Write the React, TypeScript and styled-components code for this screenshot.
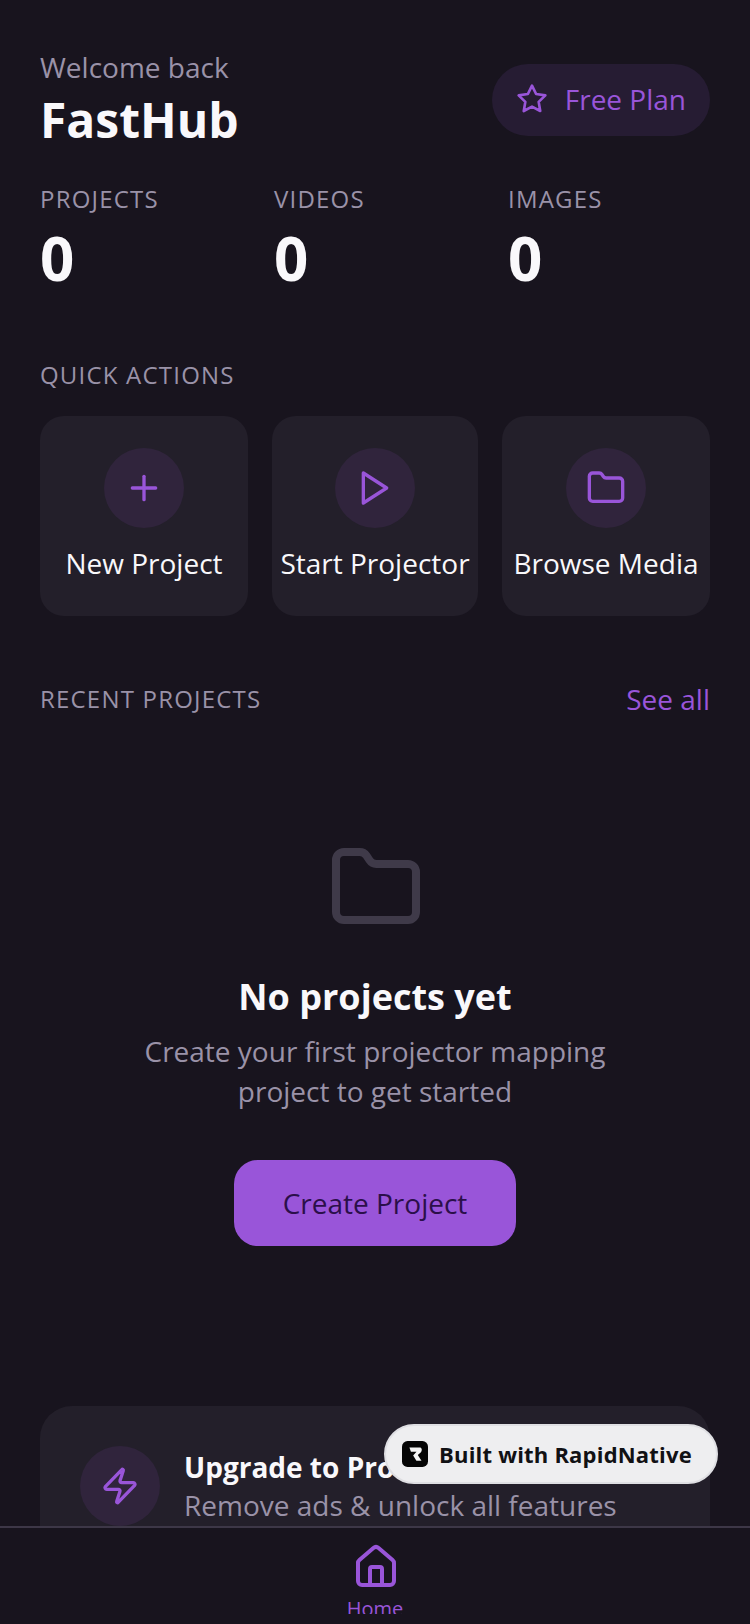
import { Folder, House, Plus, Zap } from 'lucide-react';
import { FiPlay, FiStar } from 'react-icons/fi';
import { createGlobalStyle, styled } from 'styled-components';

const GlobalStyle = createGlobalStyle`
  html, body {
    margin: 0;
    padding: 0;
    background-color: #18141e;
  }

  * {
    box-sizing: border-box;
  }
`;

const stats = ['PROJECTS', 'VIDEOS', 'IMAGES'];

const actions = [
  { label: 'New Project', Icon: Plus },
  { label: 'Start Projector', Icon: FiPlay },
  { label: 'Browse Media', Icon: Folder },
];

const App = () => {
  return (
    <Screen>
      <GlobalStyle />
      <Content>
        <Header>
          <div>
            <Welcome>Welcome back</Welcome>
            <AppName>FastHub</AppName>
          </div>
          <PlanPill>
            <FiStar size={32} />
            <span>Free Plan</span>
          </PlanPill>
        </Header>

        <StatsRow>
          {stats.map((stat) => (
            <Stat key={stat}>
              <SectionLabel>{stat}</SectionLabel>
              <StatValue>0</StatValue>
            </Stat>
          ))}
        </StatsRow>

        <QuickActions>
          <SectionLabel>QUICK ACTIONS</SectionLabel>
          <ActionGrid>
            {actions.map(({ label, Icon }) => (
              <ActionCard key={label}>
                <IconCircle>
                  <Icon size={40} />
                </IconCircle>
                <ActionLabel>{label}</ActionLabel>
              </ActionCard>
            ))}
          </ActionGrid>
        </QuickActions>

        <RecentHeader>
          <SectionLabel>RECENT PROJECTS</SectionLabel>
          <SeeAll>See all</SeeAll>
        </RecentHeader>

        <EmptyState>
          <EmptyIcon size={96} />
          <EmptyTitle>No projects yet</EmptyTitle>
          <EmptyText>
            Create your first projector mapping
            <br />
            project to get started
          </EmptyText>
          <CreateButton>Create Project</CreateButton>
        </EmptyState>

        <UpgradeCard>
          <IconCircle>
            <Zap size={40} />
          </IconCircle>
          <div>
            <UpgradeTitle>Upgrade to Pro</UpgradeTitle>
            <UpgradeText>Remove ads &amp; unlock all features</UpgradeText>
          </div>
        </UpgradeCard>
      </Content>

      <TabBar>
        <Tab>
          <HomeIcon size={48} />
          <TabLabel>Home</TabLabel>
        </Tab>
      </TabBar>

      <BuiltBadge>
        <BadgeLogo viewBox="0 0 28 28">
          <rect width="28" height="28" rx="6" fill="#050505" />
          <path d="M8 7h11c2.5 0 3 3 1.4 5L17 15.2l4 6h-5.5L12 15.6l3.6-4H9.6z" fill="#f4f4f4" />
        </BadgeLogo>
        Built with RapidNative
      </BuiltBadge>
    </Screen>
  );
};

const Screen = styled.div`
  position: relative;
  width: 750px;
  height: 1624px;
  display: flex;
  flex-direction: column;
  overflow: hidden;
  background-color: #18141e;
  font-family: 'Open Sans', 'Noto Sans', sans-serif;
`;

const Content = styled.div`
  flex: 1;
  min-height: 0;
  overflow: hidden;
  padding: 47px 40px 0;
`;

const Header = styled.div`
  display: flex;
  justify-content: space-between;
  align-items: center;
`;

const Welcome = styled.div`
  font-size: 28px;
  line-height: 40px;
  color: #9a92a8;
`;

const AppName = styled.div`
  margin-top: 3px;
  font-size: 48px;
  line-height: 60px;
  font-weight: 700;
  color: #f9f8fb;
`;

const PlanPill = styled.div`
  display: flex;
  align-items: center;
  gap: 17px;
  height: 72px;
  margin-top: 2px;
  padding: 0 24px 2px;
  border-radius: 36px;
  background-color: #261c33;
  color: #9955d9;
  font-size: 28px;
`;

const StatsRow = styled.div`
  display: flex;
  gap: 32px;
  margin-top: 33px;
`;

const Stat = styled.div`
  flex: 1;
`;

const SectionLabel = styled.div`
  font-size: 24px;
  line-height: 32px;
  letter-spacing: 1.2px;
  color: #9a92a8;
`;

const StatValue = styled.div`
  margin-top: 3px;
  font-size: 60px;
  line-height: 80px;
  font-weight: 700;
  color: #f9f8fb;
`;

const QuickActions = styled.div`
  margin-top: 61px;
`;

const ActionGrid = styled.div`
  display: grid;
  grid-template-columns: 208px 206px 208px;
  gap: 24px;
  margin-top: 25px;
`;

const ActionCard = styled.div`
  height: 200px;
  padding-top: 32px;
  display: flex;
  flex-direction: column;
  align-items: center;
  gap: 15px;
  border-radius: 24px;
  background-color: #231f2a;
`;

const IconCircle = styled.div`
  flex-shrink: 0;
  width: 80px;
  height: 80px;
  display: flex;
  align-items: center;
  justify-content: center;
  border-radius: 50%;
  background-color: #30243c;
  color: #9955d9;
`;

const ActionLabel = styled.div`
  font-size: 28px;
  line-height: 40px;
  white-space: nowrap;
  color: #f9f8fb;
`;

const RecentHeader = styled.div`
  display: flex;
  justify-content: space-between;
  align-items: center;
  margin-top: 63px;
`;

const SeeAll = styled.div`
  font-size: 28px;
  line-height: 40px;
  color: #9955d9;
`;

const EmptyState = styled.div`
  display: flex;
  flex-direction: column;
  align-items: center;
  margin-top: 121px;
`;

const EmptyIcon = styled(Folder)`
  margin-left: 2px;
  color: #3f3a49;
`;

const EmptyTitle = styled.div`
  margin-top: 37px;
  font-size: 36px;
  line-height: 48px;
  font-weight: 700;
  color: #f9f8fb;
`;

const EmptyText = styled.div`
  margin-top: 10px;
  font-size: 28px;
  line-height: 40px;
  text-align: center;
  color: #9a92a8;
`;

const CreateButton = styled.div`
  margin-top: 49px;
  width: 282px;
  height: 86px;
  display: flex;
  align-items: center;
  justify-content: center;
  border-radius: 24px;
  background-color: #9955d9;
  color: #2b0f4a;
  font-size: 28px;
`;

const UpgradeCard = styled.div`
  margin-top: 160px;
  display: flex;
  align-items: center;
  gap: 24px;
  padding: 40px;
  border-radius: 32px;
  background-color: #231f2a;
`;

const UpgradeTitle = styled.div`
  font-size: 28px;
  line-height: 38px;
  font-weight: 700;
  color: #f9f8fb;
`;

const UpgradeText = styled.div`
  font-size: 28px;
  line-height: 38px;
  color: #9a92a8;
`;

const TabBar = styled.div`
  flex-shrink: 0;
  height: 98px;
  overflow: hidden;
  display: flex;
  justify-content: center;
  border-top: 2px solid #3d3747;
  background-color: #18141e;
`;

const Tab = styled.div`
  padding-top: 15px;
  display: flex;
  flex-direction: column;
  align-items: center;
  height: 86px;
  overflow: hidden;
  color: #9955d9;
`;

const HomeIcon = styled(House)`
  flex-shrink: 0;
  margin-left: 2px;
`;

const TabLabel = styled.div`
  font-size: 20px;
  line-height: 28px;
  margin-top: 4px;
`;

const BuiltBadge = styled.div`
  position: absolute;
  left: 384px;
  top: 1424px;
  width: 334px;
  height: 60px;
  display: flex;
  align-items: center;
  gap: 11px;
  padding-left: 16px;
  border: 2px solid #dfdfe3;
  border-radius: 30px;
  background-color: #eeeef0;
  color: #111114;
  font-size: 22px;
  font-weight: 700;
  letter-spacing: 0.2px;
  white-space: nowrap;
`;

const BadgeLogo = styled.svg`
  width: 26px;
  height: 26px;
  flex-shrink: 0;
`;

export default App;
